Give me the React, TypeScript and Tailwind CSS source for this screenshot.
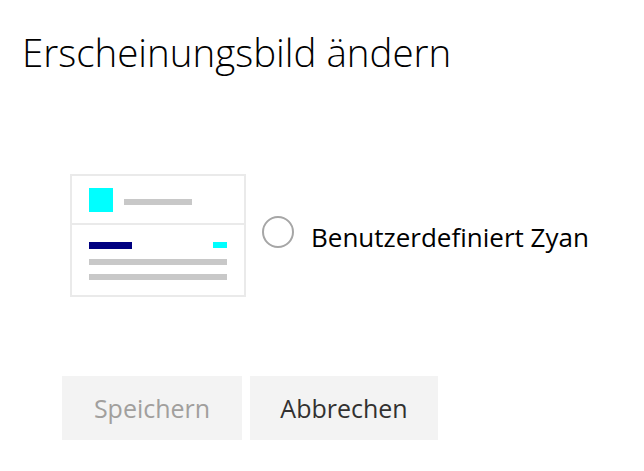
export default function App() {
  return (
    <div className="min-h-screen bg-white font-['Open_Sans',sans-serif] text-[#1a1a1a]">
      <h1 className="pl-[22px] pt-[33px] text-[38.5px] font-light leading-none text-black">
        Erscheinungsbild ändern
      </h1>

      <div className="ml-[70px] mt-[102px] flex items-start">
        {/* preview card */}
        <div className="w-[176px] h-[123px] border-2 border-[#eaeaea] flex flex-col">
          <div className="h-[49px] flex items-start gap-[11px] pl-[17px] border-b-2 border-[#eaeaea]">
            <div className="mt-[12px] w-[24px] h-[24px] bg-[#00ffff]" />
            <div className="mt-[23px] w-[68px] h-[6px] bg-[#c8c8c8]" />
          </div>
          <div className="flex flex-col px-[17px] pt-[17px] gap-[10px]">
            <div className="flex items-start justify-between">
              <div className="w-[43px] h-[7px] bg-[#000080]" />
              <div className="w-[14px] h-[6px] bg-[#00ffff]" />
            </div>
            <div className="h-[6px] bg-[#c8c8c8]" />
            <div className="h-[6px] -mt-[1px] bg-[#c8c8c8]" />
          </div>
        </div>

        <div className="ml-[16px] mt-[42px] w-[32px] h-[32px] rounded-full border-2 border-[#a6a6a6]" />
        <span className="ml-[17px] mt-[47px] text-[26px] leading-[32px] text-black">
          Benutzerdefiniert Zyan
        </span>
      </div>

      <div className="ml-[62px] mt-[79px] flex gap-[8px]">
        <button
          disabled
          className="w-[180px] h-[64px] pt-[2px] bg-[#f3f3f3] text-[25px] text-[#a19f9d]"
        >
          Speichern
        </button>
        <button className="w-[188px] h-[64px] pt-[2px] bg-[#f3f3f3] text-[25px] text-[#323130]">
          Abbrechen
        </button>
      </div>
    </div>
  );
}
